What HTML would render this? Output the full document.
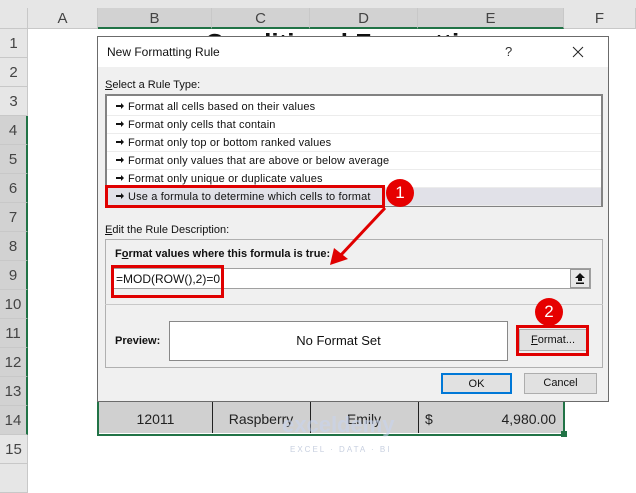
<!DOCTYPE html>
<html><head><style>
*{margin:0;padding:0;box-sizing:border-box}
body{width:636px;height:473px;background:#fff;position:relative;overflow:hidden;font-family:"Liberation Sans",sans-serif;color:#222}
.a{position:absolute}
.ch{top:8px;height:21px;background:#e6e6e6;border-right:1px solid #c8c8c8;border-bottom:1px solid #c8c8c8;text-align:center;font-size:15px;line-height:21px;color:#444}
.chs{background:#d2d2d2;border-bottom:2px solid #217346}
.rh{left:0;width:28px;height:29px;background:#e6e6e6;border-bottom:1px solid #c8c8c8;border-right:1px solid #c8c8c8;text-align:center;font-size:15px;line-height:29px;color:#444}
.rhs{background:#d2d2d2;border-right:2px solid #217346}
.it{left:0;right:0;height:18px;line-height:18px;font-size:11px;padding-left:9px;border-bottom:1px solid #ececec;color:#111;letter-spacing:.15px}
.it i{display:inline-block;width:8px;height:6px;margin-right:4px;position:relative;top:-1px;background:linear-gradient(#111,#111) 0 2px/6px 2px no-repeat}
.it i:after{content:"";position:absolute;right:0;top:0;border-left:3px solid #111;border-top:3px solid transparent;border-bottom:3px solid transparent}
.lbl{font-size:11px;color:#111}
.btn{background:#e1e1e1;border:1px solid #adadad;font-size:11px;text-align:center;color:#111}
.circ{width:28px;height:28px;border-radius:50%;background:#e60000;color:#fff;font-size:17px;text-align:center;line-height:28px}
.red{border:3px solid #e00000}
</style></head><body>
<div class="a" style="left:0;top:0;width:636px;height:8px;background:#e6e6e6"></div>
<div class="a" style="left:180px;top:30px;width:320px;height:6px;overflow:hidden"><div class="a" style="left:25px;top:-2px;font-size:26px;font-weight:bold;color:#111;white-space:nowrap">Conditional Formatting</div></div>
<div class="a ch" style="left:0;width:28px"></div>
<div class="a ch" style="left:28px;width:70px">A</div>
<div class="a ch chs" style="left:98px;width:114px">B</div>
<div class="a ch chs" style="left:212px;width:98px">C</div>
<div class="a ch chs" style="left:310px;width:108px">D</div>
<div class="a ch chs" style="left:418px;width:146px">E</div>
<div class="a ch" style="left:564px;width:72px">F</div>
<div class="a rh" style="top:29px">1</div>
<div class="a rh" style="top:58px">2</div>
<div class="a rh" style="top:87px">3</div>
<div class="a rh rhs" style="top:116px">4</div>
<div class="a rh rhs" style="top:145px">5</div>
<div class="a rh rhs" style="top:174px">6</div>
<div class="a rh rhs" style="top:203px">7</div>
<div class="a rh rhs" style="top:232px">8</div>
<div class="a rh rhs" style="top:261px">9</div>
<div class="a rh rhs" style="top:290px">10</div>
<div class="a rh rhs" style="top:319px">11</div>
<div class="a rh rhs" style="top:348px">12</div>
<div class="a rh rhs" style="top:377px">13</div>
<div class="a rh rhs" style="top:406px">14</div>
<div class="a rh" style="top:435px">15</div>
<div class="a rh" style="top:464px"></div>
<!-- table row 14 -->
<div class="a" style="left:97px;top:400px;width:468px;height:36px;border:2px solid #217346;border-top:none"></div>
<div class="a" style="left:99px;top:401px;width:464px;height:32px;background:#d0d0d0;border-top:1px solid #222"></div>
<div class="a" style="left:212px;top:401px;width:1px;height:32px;background:#222"></div>
<div class="a" style="left:310px;top:401px;width:1px;height:32px;background:#222"></div>
<div class="a" style="left:418px;top:401px;width:1px;height:32px;background:#222"></div>
<div class="a" style="left:99px;top:411px;width:113px;text-align:center;font-size:14px">12011</div>
<div class="a" style="left:212px;top:411px;width:98px;text-align:center;font-size:14px">Raspberry</div>
<div class="a" style="left:310px;top:411px;width:108px;text-align:center;font-size:14px">Emily</div>
<div class="a" style="left:425px;top:411px;font-size:14px">$</div>
<div class="a" style="left:460px;top:411px;width:96px;text-align:right;font-size:14px">4,980.00</div>
<div class="a" style="left:561px;top:431px;width:6px;height:6px;background:#217346"></div>
<div class="a" style="left:282px;top:412px;font-size:22px;font-weight:bold;color:#c8d4ee;opacity:.6">exceldemy</div>
<div class="a" style="left:290px;top:445px;font-size:8px;letter-spacing:2px;color:#c8d0e0">EXCEL · DATA · BI</div>
<!-- dialog -->
<div class="a" style="left:97px;top:36px;width:512px;height:366px;background:#f0f0f0;border:1px solid #6b6b6b">
 <div class="a" style="left:0;top:0;right:0;height:30px;background:#fff"></div>
 <div class="a" style="left:9px;top:8px;font-size:12px;color:#111">New Formatting Rule</div>
 <div class="a" style="left:407px;top:7px;font-size:13px;color:#333">?</div>
 <svg class="a" style="left:474px;top:9px" width="12" height="12"><path d="M1 1L11 11M11 1L1 11" stroke="#222" stroke-width="1"/></svg>
 <div class="a lbl" style="left:7px;top:42px"><u>S</u>elect a Rule Type:</div>
 <div class="a" style="left:7px;top:57px;width:498px;height:113px;background:#fff;border:2px solid #828282">
  <div class="a it" style="top:2px"><i></i>Format all cells based on their values</div>
  <div class="a it" style="top:20px"><i></i>Format only cells that contain</div>
  <div class="a it" style="top:38px"><i></i>Format only top or bottom ranked values</div>
  <div class="a it" style="top:56px"><i></i>Format only values that are above or below average</div>
  <div class="a it" style="top:74px"><i></i>Format only unique or duplicate values</div>
  <div class="a it" style="top:92px;background:#e1e1e8"><i></i>Use a formula to determine which cells to format</div>
 </div>
 <div class="a red" style="left:7px;top:148px;width:280px;height:23px"></div>
 <div class="a lbl" style="left:7px;top:187px"><u>E</u>dit the Rule Description:</div>
 <div class="a" style="left:7px;top:202px;width:498px;height:129px;border:1px solid #b0b0b0"></div>
 <div class="a lbl" style="left:17px;top:211px;font-weight:bold">F<u>o</u>rmat values where this formula is true:</div>
 <div class="a" style="left:13px;top:231px;width:480px;height:21px;background:#fff;border:1px solid #a0a0a0"></div>
 <div class="a" style="left:472px;top:232px;width:20px;height:19px;background:#e8e8e8;border:1px solid #999"></div>
 <svg class="a" style="left:477px;top:236px" width="10" height="11"><path d="M5 0L10 5H7V8H3V5H0Z M1 9.5H9V11H1Z" fill="#111"/></svg>
 <div class="a" style="left:18px;top:235px;font-size:12px;color:#111">=MOD(ROW(),2)=0</div>
 <div class="a red" style="left:13px;top:228px;width:113px;height:33px"></div>
 <div class="a" style="left:7px;top:267px;width:498px;height:1px;background:#c8c8c8"></div>
 <div class="a lbl" style="left:17px;top:298px;font-weight:bold">Preview:</div>
 <div class="a" style="left:71px;top:284px;width:339px;height:40px;background:#fff;border:1px solid #888;text-align:center;line-height:38px;font-size:13px;color:#111">No Format Set</div>
 <div class="a btn" style="left:421px;top:292px;width:68px;height:22px;line-height:20px"><u>F</u>ormat...</div>
 <div class="a red" style="left:418px;top:288px;width:73px;height:31px"></div>
 <div class="a btn" style="left:343px;top:336px;width:71px;height:21px;line-height:19px;border:2px solid #0078d7">OK</div>
 <div class="a btn" style="left:426px;top:336px;width:73px;height:21px;line-height:19px">Cancel</div>
</div>
<div class="a circ" style="left:386px;top:179px">1</div>
<div class="a circ" style="left:535px;top:298px">2</div>
<svg class="a" style="left:0;top:0" width="636" height="473"><line x1="385" y1="208" x2="340" y2="256" stroke="#e00000" stroke-width="3"/><polygon points="330,265 334,248 348,259" fill="#e00000"/></svg>
</body></html>
